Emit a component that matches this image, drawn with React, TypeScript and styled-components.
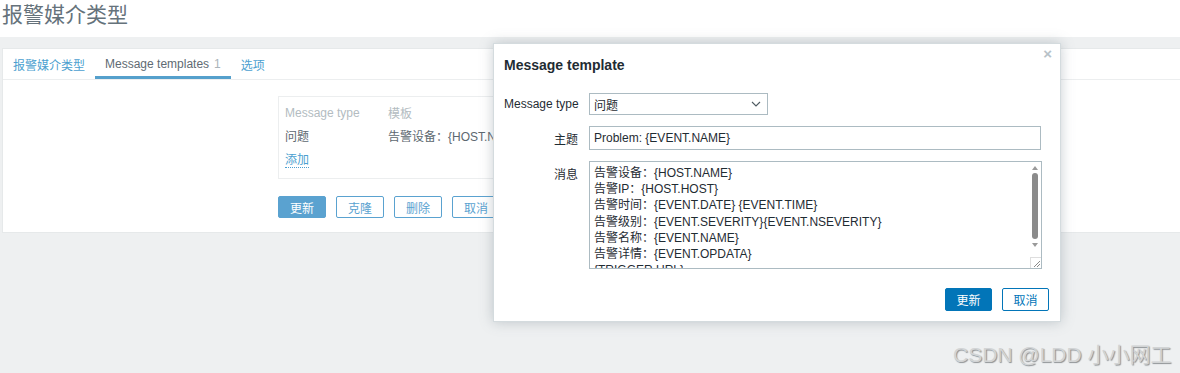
import React from "react";
import styled, { createGlobalStyle } from "styled-components";

const Global = createGlobalStyle`
  html, body { margin: 0; padding: 0; }
  body {
    width: 1180px; height: 373px; overflow: hidden;
    font-family: "Liberation Sans", Arial, "Noto Sans CJK SC", sans-serif;
    font-size: 12px; color: #1f2c33; background: #eef0f1;
  }
  * { box-sizing: border-box; }
`;

const Page = styled.div`
  position: relative;
  width: 1180px;
  height: 373px;
  display: flex;
  flex-direction: column;
`;

const Header = styled.header`
  height: 37px;
  background: #fff;
  padding: 2px 0 0 2px;
  display: flex;
  align-items: flex-start;
`;

const Title = styled.h1`
  margin: 0;
  font-size: 21px;
  font-weight: normal;
  color: #65727b;
  line-height: 26px;
`;

const Main = styled.main`
  flex: 1;
  padding: 11px 0 0 2px;
  background: #eef0f1;
`;

const Card = styled.section`
  height: 185px;
  background: #fff;
  border: 1px solid #e6e9ea;
  border-right: none;
`;

const Tabs = styled.nav`
  display: flex;
  height: 31px;
  border-bottom: 1px solid #eceeef;
`;

const Tab = styled.div<{ $active?: boolean }>`
  padding: 3px 10px 0;
  display: flex;
  align-items: center;
  gap: 5px;
  color: ${p => (p.$active ? "#5f6b73" : "#4c9fd0")};
  border-bottom: 3px solid ${p => (p.$active ? "#55a0cc" : "transparent")};
`;

const Count = styled.span`
  color: #aab4ba;
`;

const TabBody = styled.div`
  padding: 16px 0 0 275px;
`;

const TableBox = styled.div`
  width: 480px;
  height: 83px;
  border: 1px solid #eceeef;
  padding: 4px 6px;
`;

const Row = styled.div`
  display: grid;
  grid-template-columns: 103px 1fr;
  height: 23px;
  align-items: center;
`;

const Th = styled.span`
  color: #b3bcc1;
`;

const Td = styled.span`
  color: #5d6870;
  white-space: nowrap;
`;

const AddLink = styled.span`
  display: inline-block;
  margin-top: 6px;
  color: #4c9fd0;
  border-bottom: 1px dotted #4c9fd0;
  line-height: 14px;
`;

const ButtonRow = styled.div`
  display: flex;
  gap: 10px;
  margin-top: 17px;
`;

const Btn = styled.button<{ $primary?: boolean; $strong?: boolean }>`
  height: ${p => (p.$strong ? 23 : 22)}px;
  min-width: ${p => (p.$strong ? 47 : 48)}px;
  padding: 0 10px;
  font-family: inherit;
  font-size: 12px;
  border-radius: 2px;
  cursor: pointer;
  border: 1px solid ${p => (p.$strong ? "#0275b8" : "#5aa2d0")};
  background: ${p => (p.$primary ? (p.$strong ? "#0275b8" : "#5aa2d0") : "#fff")};
  color: ${p => (p.$primary ? "#fff" : p.$strong ? "#0275b8" : "#5aa2d0")};
`;

const Dialog = styled.div`
  position: absolute;
  left: 493px;
  top: 43px;
  width: 568px;
  height: 279px;
  background: #fff;
  border: 1px solid #d4dbde;
  box-shadow: 0 0 12px rgba(100, 115, 125, 0.35);
  display: flex;
  flex-direction: column;
`;

const DialogHead = styled.div`
  position: relative;
  height: 49px;
  padding: 13px 10px 0;
`;

const DialogTitle = styled.h2`
  margin: 0;
  font-size: 14px;
  font-weight: bold;
  color: #1f2c33;
  line-height: 16px;
`;

const Close = styled.span`
  position: absolute;
  right: 8px;
  top: 1px;
  font-size: 15px;
  font-weight: bold;
  color: #b7c2c8;
`;

const Form = styled.div`
  display: grid;
  grid-template-columns: 74px 452px;
  column-gap: 11px;
  row-gap: 11px;
  padding: 0 10px;
  align-items: center;
`;

const Label = styled.label<{ $top?: boolean }>`
  text-align: right;
  color: #1f2c33;
  align-self: ${p => (p.$top ? "start" : "center")};
  padding-top: ${p => (p.$top ? 4 : 0)}px;
  white-space: nowrap;
`;

const Select = styled.div`
  width: 179px;
  height: 22px;
  border: 1px solid #acbbc2;
  display: flex;
  align-items: center;
  justify-content: space-between;
  padding: 0 6px 0 4px;
`;

const Input = styled.div`
  height: 24px;
  border: 1px solid #acbbc2;
  display: flex;
  align-items: center;
  padding: 0 4px;
`;

const TextArea = styled.div`
  height: 108px;
  width: 453px;
  border: 1px solid #acbbc2;
  display: flex;
  overflow: hidden;
`;

const TextContent = styled.div`
  flex: 1;
  padding: 3px 4px;
  line-height: 16.2px;
  white-space: pre;
  overflow: hidden;
`;

const ScrollBar = styled.div`
  width: 12px;
  display: flex;
  flex-direction: column;
  align-items: center;
  position: relative;
`;

const Thumb = styled.div`
  width: 6px;
  height: 66px;
  margin-top: 3px;
  border-radius: 3px;
  background: #8b8b8b;
`;

const Arrow = styled.div<{ $down?: boolean }>`
  width: 0;
  height: 0;
  margin-top: 4px;
  border-left: 3px solid transparent;
  border-right: 3px solid transparent;
  ${p =>
    p.$down
      ? "border-top: 4px solid #9a9a9a;"
      : "border-bottom: 4px solid #9a9a9a;"}
`;

const Grip = styled.div`
  position: absolute;
  bottom: 0;
  right: 0;
  width: 11px;
  height: 11px;
  border-top: 1px solid #dedede;
  border-left: 1px solid #dedede;
  background: #fff;
  display: flex;
`;

const Watermark = styled.div`
  position: absolute;
  left: 953px;
  top: 338px;
  font-size: 21px;
  color: #d2d4d5;
  text-shadow: 1px 1px 1px #8d9194;
  white-space: nowrap;
`;

const DialogFoot = styled.div`
  margin-top: auto;
  display: flex;
  justify-content: flex-end;
  gap: 10px;
  padding: 0 11px 10px 0;
`;

const message = `告警设备：{HOST.NAME}
告警IP：{HOST.HOST}
告警时间：{EVENT.DATE} {EVENT.TIME}
告警级别：{EVENT.SEVERITY}{EVENT.NSEVERITY}
告警名称：{EVENT.NAME}
告警详情：{EVENT.OPDATA}
{TRIGGER.URL}`;

export default function App() {
  return (
    <>
      <Global />
      <Page>
        <Header>
          <Title>报警媒介类型</Title>
        </Header>
        <Main>
          <Card>
            <Tabs>
              <Tab>报警媒介类型</Tab>
              <Tab $active>
                Message templates <Count>1</Count>
              </Tab>
              <Tab>选项</Tab>
            </Tabs>
            <TabBody>
              <TableBox>
                <Row>
                  <Th>Message type</Th>
                  <Th>模板</Th>
                </Row>
                <Row>
                  <Td>问题</Td>
                  <Td>告警设备：{"{HOST.NAME}"}</Td>
                </Row>
                <AddLink>添加</AddLink>
              </TableBox>
              <ButtonRow>
                <Btn $primary>更新</Btn>
                <Btn>克隆</Btn>
                <Btn>删除</Btn>
                <Btn>取消</Btn>
              </ButtonRow>
            </TabBody>
          </Card>
        </Main>

        <Dialog>
          <DialogHead>
            <DialogTitle>Message template</DialogTitle>
            <Close>×</Close>
          </DialogHead>
          <Form>
            <Label>Message type</Label>
            <Select>
              <span>问题</span>
              <svg width="10" height="6" viewBox="0 0 10 6">
                <path d="M1 1l4 4 4-4" fill="none" stroke="#4f5b62" strokeWidth="1.1" />
              </svg>
            </Select>
            <Label>主题</Label>
            <Input>Problem: {"{EVENT.NAME}"}</Input>
            <Label $top>消息</Label>
            <TextArea>
              <TextContent>{message}</TextContent>
              <ScrollBar>
                <Arrow />
                <Thumb />
                <Arrow $down />
                <Grip>
                  <svg width="10" height="10" viewBox="0 0 10 10">
                    <path d="M3 9L9 3M6 9L9 6" stroke="#8a8a8a" strokeWidth="1" />
                  </svg>
                </Grip>
              </ScrollBar>
            </TextArea>
          </Form>
          <DialogFoot>
            <Btn $primary $strong>更新</Btn>
            <Btn $strong>取消</Btn>
          </DialogFoot>
        </Dialog>

        <Watermark>CSDN @LDD 小小网工</Watermark>
      </Page>
    </>
  );
}
